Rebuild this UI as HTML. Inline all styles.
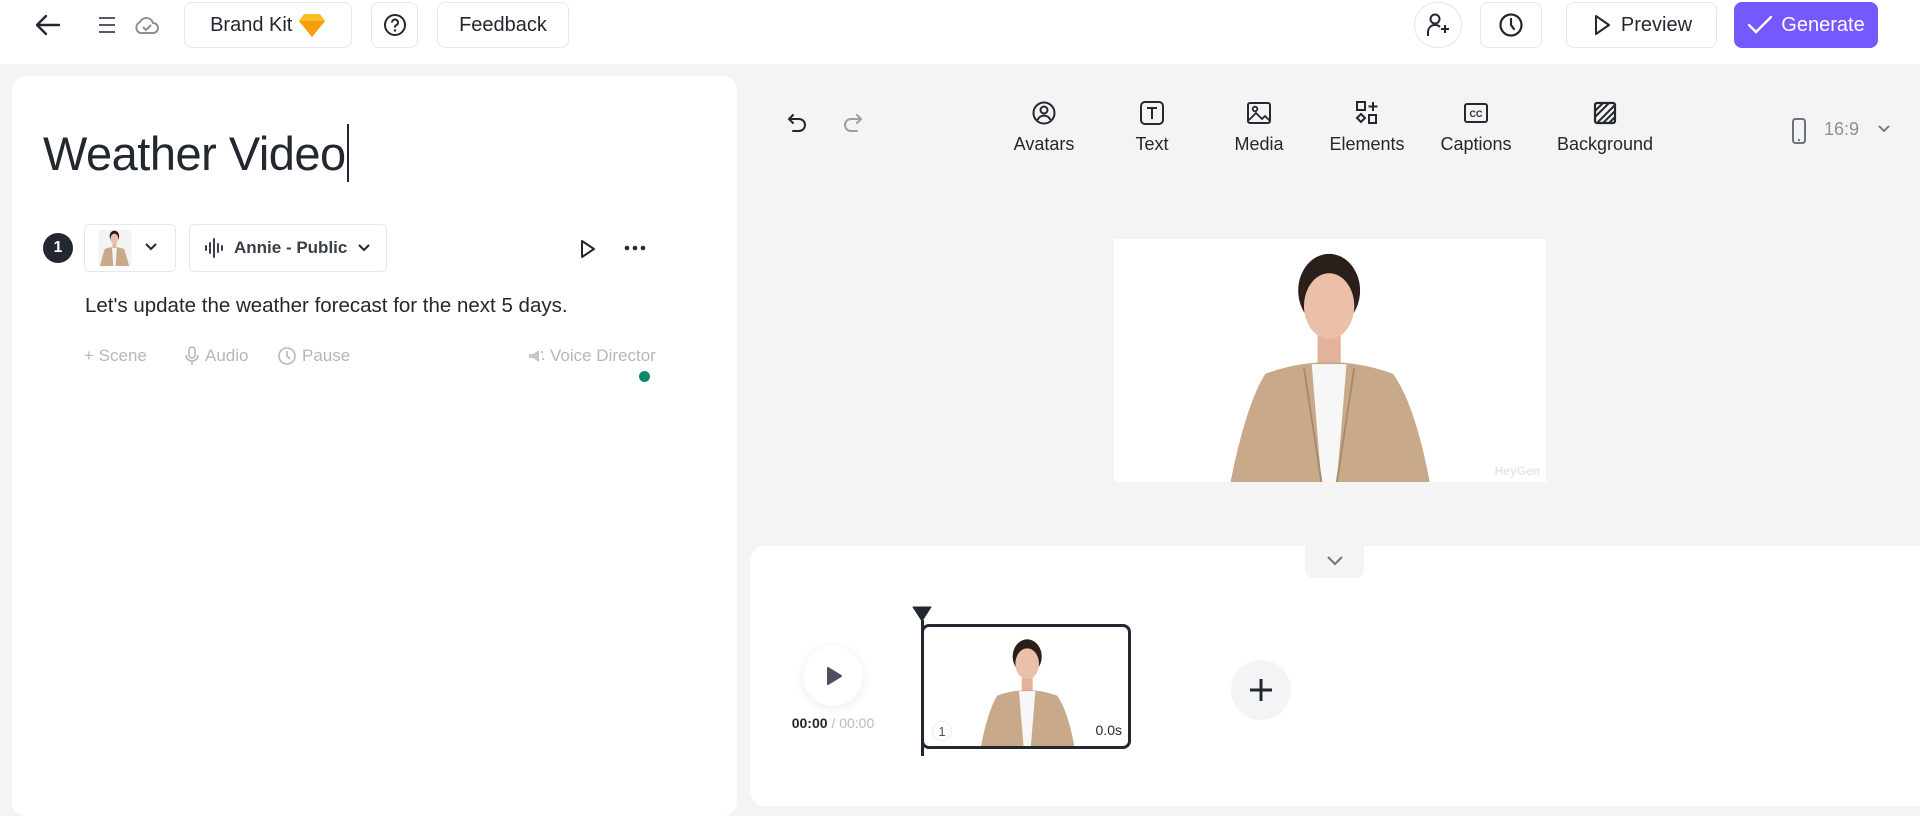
<!DOCTYPE html>
<html><head><meta charset="utf-8"><style>
*{box-sizing:border-box;margin:0;padding:0}
body{width:1920px;height:793px;overflow:hidden;background:#f4f4f4;font-family:"Liberation Sans",Arial,sans-serif;color:#23272f;position:relative}
.abs{position:absolute}
.top{position:absolute;left:0;top:0;width:1920px;height:64px;background:#fff}
.btn{position:absolute;top:2px;height:46px;border:1px solid #e6e7ea;border-radius:8px;background:#fff;display:flex;align-items:center;justify-content:center;font-size:20px;color:#23272f}
.panel{position:absolute;background:#fff;border-radius:14px}
.tool{position:absolute;top:100px;width:110px;text-align:center;font-size:18px;color:#23272f}
.tool svg{display:block;margin:0 auto 8px}
.act{position:absolute;top:346px;font-size:17px;color:#b3b7bd;display:flex;align-items:center;gap:5px}
</style></head><body>
<div class="top">
  <svg class="abs" style="left:34px;top:12px" width="28" height="26" viewBox="0 0 28 26"><path d="M25 13H4M12 4L3 13l9 9" fill="none" stroke="#23272f" stroke-width="2.4" stroke-linecap="round" stroke-linejoin="round"/></svg>
  <svg class="abs" style="left:97px;top:15px" width="20" height="20" viewBox="0 0 20 20"><path d="M2 3h16M2 10h16M2 17h16" stroke="#555b66" stroke-width="2"/></svg>
  <svg class="abs" style="left:133px;top:14px" width="26" height="22" viewBox="0 0 26 22"><path d="M7 19h13a5 5 0 0 0 0-10 7 7 0 0 0-13-1 6 6 0 0 0 0 11z" fill="none" stroke="#8a8f98" stroke-width="2"/><path d="M10 13l3 3 5-5" fill="none" stroke="#8a8f98" stroke-width="2"/></svg>
  <div class="btn" style="left:184px;width:168px">Brand Kit&nbsp;<svg width="28" height="26" viewBox="0 0 28 26"><path d="M6 2h16l5 7-13 16L1 9z" fill="#fbbf24"/><path d="M1 9h26L14 25z" fill="#f59e0b"/></svg></div>
  <div class="btn" style="left:371px;width:47px"><svg width="24" height="24" viewBox="0 0 24 24"><circle cx="12" cy="12" r="10" fill="none" stroke="#23272f" stroke-width="2"/><path d="M9 9.5a3 3 0 1 1 4 2.8c-1 .4-1 1.2-1 2.2" fill="none" stroke="#23272f" stroke-width="2"/><circle cx="12" cy="17.5" r="1.2" fill="#23272f"/></svg></div>
  <div class="btn" style="left:437px;width:132px">Feedback</div>
  <div class="btn" style="left:1414px;width:48px;border-radius:24px"><svg width="24" height="26" viewBox="0 0 24 26"><circle cx="9" cy="7" r="4.5" fill="none" stroke="#23272f" stroke-width="2"/><path d="M2 24v-4a7 7 0 0 1 12-5M19 13v8M15 17h8" fill="none" stroke="#23272f" stroke-width="2"/></svg></div>
  <div class="btn" style="left:1480px;width:62px"><svg width="26" height="26" viewBox="0 0 26 26"><circle cx="13" cy="13" r="10.5" fill="none" stroke="#23272f" stroke-width="2.2"/><path d="M13 7v6l3 4" fill="none" stroke="#23272f" stroke-width="2.2" stroke-linecap="round"/></svg></div>
  <div class="btn" style="left:1566px;width:151px"><svg width="22" height="24" viewBox="0 0 22 24" style="margin-right:8px"><path d="M5 3l13 9-13 9z" fill="none" stroke="#23272f" stroke-width="2" stroke-linejoin="round"/></svg>Preview</div>
  <div class="btn" style="left:1734px;width:144px;background:#7559ff;border-color:#7559ff;color:#fff"><svg width="26" height="22" viewBox="0 0 26 22" style="margin-right:8px"><path d="M2 11l7 7L24 3" fill="none" stroke="#fff" stroke-width="2.4" stroke-linecap="round"/></svg>Generate</div>
</div>

<div class="panel" style="left:12px;top:76px;width:725px;height:740px"></div>
<div class="abs" style="left:43px;top:126px;font-size:47px;color:#23272f;letter-spacing:-0.5px">Weather Video</div>
<div class="abs" style="left:347px;top:124px;width:2px;height:58px;background:#23272f"></div>
<div class="abs" style="left:43px;top:233px;width:30px;height:30px;border-radius:50%;background:#23272f;color:#fff;font-weight:bold;font-size:16px;display:flex;align-items:center;justify-content:center">1</div>
<div class="abs" style="left:84px;top:224px;width:92px;height:48px;border:1px solid #e6e7ea;border-radius:6px;background:#fff"></div>
<svg class="abs" style="left:97px;top:230px" width="36" height="36" viewBox="0 0 220 240"><rect width="220" height="240" fill="#f3f3f3"/><ellipse cx="106" cy="42" rx="32" ry="38" fill="#2a1f1a"/><rect x="94" y="80" width="24" height="40" fill="#e2b29a"/><ellipse cx="106" cy="58" rx="26" ry="34" fill="#ecc0a8"/><path d="M40 128Q106 100 172 128L205 240H10z" fill="#c8a98a"/><path d="M90 118h32l-8 122h-16z" fill="#f5f5f5"/></svg>
<svg class="abs" style="left:144px;top:242px" width="14" height="10" viewBox="0 0 14 10"><path d="M2 2l5 5 5-5" fill="none" stroke="#23272f" stroke-width="2"/></svg>
<div class="abs" style="left:189px;top:224px;width:198px;height:48px;border:1px solid #e6e7ea;border-radius:6px;background:#fff;display:flex;align-items:center;padding-left:14px;font-size:17px;font-weight:bold;color:#3a3f48">
<svg width="22" height="22" viewBox="0 0 22 22" style="margin-right:8px"><path d="M2 9v4M6 6v10M10 2v18M14 7v8M18 9v4" stroke="#3a3f48" stroke-width="2" stroke-linecap="round"/></svg>Annie - Public<svg width="14" height="10" viewBox="0 0 14 10" style="margin-left:10px"><path d="M2 2l5 5 5-5" fill="none" stroke="#23272f" stroke-width="2"/></svg></div>
<svg class="abs" style="left:578px;top:238px" width="20" height="22" viewBox="0 0 20 22"><path d="M4 3l12 8-12 8z" fill="none" stroke="#23272f" stroke-width="2" stroke-linejoin="round"/></svg>
<svg class="abs" style="left:624px;top:244px" width="22" height="8" viewBox="0 0 22 8"><circle cx="3" cy="4" r="2.3" fill="#23272f"/><circle cx="11" cy="4" r="2.3" fill="#23272f"/><circle cx="19" cy="4" r="2.3" fill="#23272f"/></svg>
<div class="abs" style="left:85px;top:294px;font-size:20.5px;color:#23272f">Let's update the weather forecast for the next 5 days.</div>
<div class="act" style="left:84px">+ Scene</div>
<div class="act" style="left:184px"><svg width="16" height="20" viewBox="0 0 16 20"><rect x="5" y="1" width="6" height="11" rx="3" fill="none" stroke="#b3b7bd" stroke-width="1.6"/><path d="M2 9a6 6 0 0 0 12 0M8 15v4" fill="none" stroke="#b3b7bd" stroke-width="1.6"/></svg>Audio</div>
<div class="act" style="left:277px"><svg width="20" height="20" viewBox="0 0 20 20"><circle cx="10" cy="10" r="8" fill="none" stroke="#b3b7bd" stroke-width="1.6"/><path d="M10 5v5l3 3" fill="none" stroke="#b3b7bd" stroke-width="1.6"/></svg>Pause</div>
<div class="act" style="left:527px"><svg width="18" height="18" viewBox="0 0 18 18"><path d="M2 7h4l6-4v12l-6-4H2z" fill="#c3c7cc"/><circle cx="15" cy="5" r="1" fill="#b3b7bd"/><circle cx="16" cy="12" r="1" fill="#b3b7bd"/></svg>Voice Director</div>
<div class="abs" style="left:639px;top:371px;width:11px;height:11px;border-radius:50%;background:#0b8a6a"></div>

<svg class="abs" style="left:786px;top:112px" width="24" height="24" viewBox="0 0 24 24"><path d="M7 3L3 7l4 4M3 7h10a6 6 0 0 1 0 12H7" fill="none" stroke="#23272f" stroke-width="2" stroke-linecap="round"/></svg>
<svg class="abs" style="left:840px;top:112px" width="24" height="24" viewBox="0 0 24 24"><path d="M17 3l4 4-4 4M21 7H11a6 6 0 0 0 0 12h6" fill="none" stroke="#9aa0a8" stroke-width="2" stroke-linecap="round"/></svg>

<div class="tool" style="left:989px"><svg width="24" height="26" viewBox="0 0 24 26"><circle cx="12" cy="13" r="10.5" fill="none" stroke="#23272f" stroke-width="2"/><circle cx="12" cy="10" r="3.5" fill="none" stroke="#23272f" stroke-width="2"/><path d="M5.5 20a7 7 0 0 1 13 0" fill="none" stroke="#23272f" stroke-width="2"/></svg>Avatars</div>
<div class="tool" style="left:1097px"><svg width="26" height="26" viewBox="0 0 26 26"><rect x="2" y="2" width="22" height="22" rx="4" fill="none" stroke="#23272f" stroke-width="2"/><path d="M8 8h10M13 8v11" stroke="#23272f" stroke-width="2"/></svg>Text</div>
<div class="tool" style="left:1204px"><svg width="26" height="26" viewBox="0 0 26 26"><rect x="2" y="3" width="22" height="20" rx="2" fill="none" stroke="#23272f" stroke-width="2"/><circle cx="9" cy="9" r="2.3" fill="none" stroke="#23272f" stroke-width="1.8"/><path d="M3 20l7-7 6 6 3-3 5 5" fill="none" stroke="#23272f" stroke-width="1.8"/></svg>Media</div>
<div class="tool" style="left:1312px"><svg width="26" height="26" viewBox="0 0 26 26"><rect x="3" y="2" width="8" height="8" fill="none" stroke="#23272f" stroke-width="2"/><path d="M19 2v9M14.5 6.5h9" stroke="#23272f" stroke-width="2"/><path d="M7 14l4 4-4 4-4-4z" fill="none" stroke="#23272f" stroke-width="2"/><rect x="15" y="15" width="7" height="8" fill="none" stroke="#23272f" stroke-width="2"/></svg>Elements</div>
<div class="tool" style="left:1421px"><svg width="26" height="26" viewBox="0 0 26 26"><rect x="2" y="4" width="22" height="18" rx="2" fill="none" stroke="#23272f" stroke-width="2"/><text x="13" y="17" font-size="9" font-family="Liberation Sans" text-anchor="middle" fill="#23272f" font-weight="bold">CC</text></svg>Captions</div>
<div class="tool" style="left:1550px"><svg width="26" height="26" viewBox="0 0 26 26"><rect x="3" y="3" width="20" height="20" rx="2" fill="none" stroke="#23272f" stroke-width="2.2"/><path d="M3 11l8-8M3 17l14-14M5 23l18-18M11 23l12-12M17 23l6-6" stroke="#23272f" stroke-width="2"/></svg>Background</div>

<svg class="abs" style="left:1790px;top:117px" width="18" height="28" viewBox="0 0 18 28"><rect x="3" y="2" width="12" height="24" rx="2.5" fill="none" stroke="#6b7280" stroke-width="2"/><path d="M8 23h2" stroke="#6b7280" stroke-width="2"/></svg>
<div class="abs" style="left:1824px;top:119px;font-size:18px;color:#8a8f98">16:9</div>
<svg class="abs" style="left:1877px;top:124px" width="14" height="10" viewBox="0 0 14 10"><path d="M2 2l5 5 5-5" fill="none" stroke="#6b7280" stroke-width="1.8"/></svg>

<div class="abs" style="left:1114px;top:239px;width:432px;height:243px;background:#fff;overflow:hidden">
<svg class="abs" style="left:109px;top:11px" width="220" height="232" viewBox="0 0 220 240"><ellipse cx="106" cy="42" rx="32" ry="38" fill="#2a1f1a"/><rect x="94" y="80" width="24" height="42" fill="#e2b29a"/><ellipse cx="106" cy="58" rx="26" ry="34" fill="#ecc0a8"/><path d="M40 128Q106 104 172 128Q195 160 210 240H4Q20 160 40 128z" fill="#c8a98a"/><path d="M88 118h36l-10 122h-16z" fill="#f7f7f7"/><path d="M80 122l18 118M132 122l-18 118" stroke="#a88a6e" stroke-width="2" fill="none"/></svg>
<div class="abs" style="right:6px;bottom:4px;font-size:12px;color:#e6e6e6;font-weight:bold">HeyGen</div>
</div>

<div class="panel" style="left:750px;top:546px;width:1190px;height:260px"></div>
<div class="abs" style="left:1305px;top:546px;width:59px;height:32px;background:#f4f4f5;border-radius:0 0 8px 8px"></div>
<svg class="abs" style="left:1325px;top:554px" width="20" height="14" viewBox="0 0 20 14"><path d="M3 3l7 7 7-7" fill="none" stroke="#6b7280" stroke-width="2"/></svg>
<div class="abs" style="left:803px;top:646px;width:60px;height:60px;border-radius:50%;background:#fff;box-shadow:0 2px 10px rgba(0,0,0,.08)"></div>
<svg class="abs" style="left:825px;top:666px" width="18" height="20" viewBox="0 0 18 20"><path d="M3 2l13 8-13 8z" fill="#4b5060" stroke="#4b5060" stroke-width="2" stroke-linejoin="round"/></svg>
<div class="abs" style="left:783px;top:715px;width:100px;text-align:center;font-size:14px;color:#23272f"><b>00:00</b> <span style="color:#b7bcc4">/ 00:00</span></div>
<div class="abs" style="left:921px;top:624px;width:210px;height:125px;border:3px solid #23272f;border-radius:8px;background:#fff;overflow:hidden">
<svg class="abs" style="left:55px;top:8px" width="100" height="114" viewBox="0 0 220 240"><ellipse cx="106" cy="42" rx="32" ry="38" fill="#2a1f1a"/><rect x="94" y="80" width="24" height="42" fill="#e2b29a"/><ellipse cx="106" cy="58" rx="26" ry="34" fill="#ecc0a8"/><path d="M40 128Q106 104 172 128Q195 160 210 240H4Q20 160 40 128z" fill="#c8a98a"/><path d="M88 118h36l-10 122h-16z" fill="#f7f7f7"/></svg>
<div class="abs" style="left:8px;top:94px;width:20px;height:20px;border-radius:50%;border:1px solid #eee;background:#fff;font-size:13px;display:flex;align-items:center;justify-content:center;color:#4b5060">1</div>
<div class="abs" style="right:6px;top:95px;font-size:14px;color:#23272f">0.0s</div>
</div>
<div class="abs" style="left:921px;top:620px;width:3px;height:136px;background:#23272f"></div>
<svg class="abs" style="left:912px;top:606px" width="20" height="16" viewBox="0 0 20 16"><path d="M1 1h18l-9 14z" fill="#23272f" stroke="#23272f" stroke-linejoin="round"/></svg>
<div class="abs" style="left:1231px;top:660px;width:60px;height:60px;border-radius:50%;background:#f3f4f6"></div>
<svg class="abs" style="left:1247px;top:676px" width="28" height="28" viewBox="0 0 28 28"><path d="M14 3v22M3 14h22" stroke="#23272f" stroke-width="3"/></svg>
</body></html>
